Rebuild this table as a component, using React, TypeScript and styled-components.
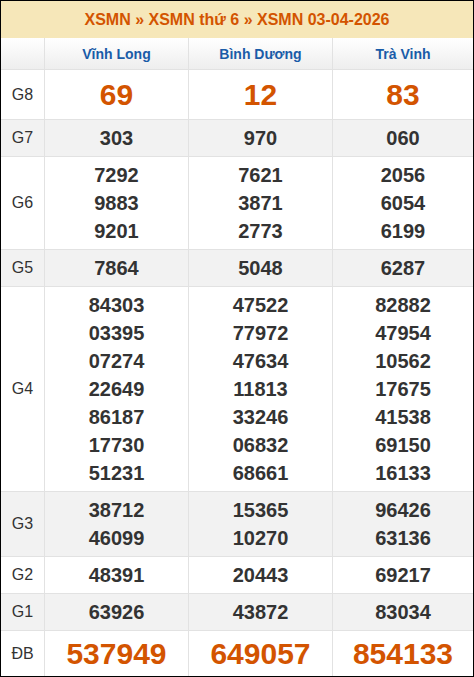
import styled, { createGlobalStyle } from 'styled-components'

const GlobalStyle = createGlobalStyle`
  html, body {
    margin: 0;
    padding: 0;
    background: #fff;
    font-family: "Liberation Sans", Arial, sans-serif;
  }
`

const Board = styled.section`
  width: 474px;
  height: 677px;
  box-sizing: border-box;
  border: 1px solid #000;
  background: #fff;
  display: flex;
  flex-direction: column;
`

const Heading = styled.h1`
  margin: 0;
  height: 37px;
  background: #f6e7b9;
  color: #d35400;
  font-size: 16px;
  font-weight: bold;
  display: flex;
  align-items: center;
  justify-content: center;
`

const Grid = styled.div`
  display: grid;
  grid-template-columns: 43px 143px 143px 140px;
  grid-template-rows: 31px 49px 36px 92px 36px 204px 64px 36px 36px 45px;
  gap: 1px;
  background: #e2e2e2;
`

const HeadCell = styled.div`
  background: linear-gradient(#fff, #eeeeee);
  color: #1a5ca8;
  font-size: 14px;
  font-weight: bold;
  display: flex;
  align-items: center;
  justify-content: center;
`

const Label = styled.div<{ $alt?: boolean }>`
  background: ${(p) => (p.$alt ? '#f2f2f2' : '#fff')};
  color: #333;
  font-size: 16px;
  display: flex;
  align-items: center;
  justify-content: center;
`

const Cell = styled.div<{ $alt?: boolean; $big?: boolean }>`
  background: ${(p) => (p.$alt ? '#f2f2f2' : '#fff')};
  color: ${(p) => (p.$big ? '#d35400' : '#333')};
  font-size: ${(p) => (p.$big ? '30px' : '20px')};
  font-weight: bold;
  line-height: ${(p) => (p.$big ? '36px' : '28px')};
  display: flex;
  flex-direction: column;
  align-items: center;
  justify-content: center;
`

const provinces = ['Vĩnh Long', 'Bình Dương', 'Trà Vinh']

const rows: { label: string; big?: boolean; cols: string[][] }[] = [
  { label: 'G8', big: true, cols: [['69'], ['12'], ['83']] },
  { label: 'G7', cols: [['303'], ['970'], ['060']] },
  {
    label: 'G6',
    cols: [
      ['7292', '9883', '9201'],
      ['7621', '3871', '2773'],
      ['2056', '6054', '6199'],
    ],
  },
  { label: 'G5', cols: [['7864'], ['5048'], ['6287']] },
  {
    label: 'G4',
    cols: [
      ['84303', '03395', '07274', '22649', '86187', '17730', '51231'],
      ['47522', '77972', '47634', '11813', '33246', '06832', '68661'],
      ['82882', '47954', '10562', '17675', '41538', '69150', '16133'],
    ],
  },
  {
    label: 'G3',
    cols: [
      ['38712', '46099'],
      ['15365', '10270'],
      ['96426', '63136'],
    ],
  },
  { label: 'G2', cols: [['48391'], ['20443'], ['69217']] },
  { label: 'G1', cols: [['63926'], ['43872'], ['83034']] },
  { label: 'ĐB', big: true, cols: [['537949'], ['649057'], ['854133']] },
]

export default function App() {
  return (
    <>
      <GlobalStyle />
      <Board>
        <Heading>XSMN » XSMN thứ 6 » XSMN 03-04-2026</Heading>
        <Grid>
          <HeadCell />
          {provinces.map((p) => (
            <HeadCell key={p}>{p}</HeadCell>
          ))}
          {rows.map((row, i) => {
            const alt = i % 2 === 1
            return [
              <Label key={row.label} $alt={alt}>
                {row.label}
              </Label>,
              ...row.cols.map((nums, j) => (
                <Cell key={row.label + j} $alt={alt} $big={row.big}>
                  {nums.map((n) => (
                    <span key={n}>{n}</span>
                  ))}
                </Cell>
              )),
            ]
          })}
        </Grid>
      </Board>
    </>
  )
}
